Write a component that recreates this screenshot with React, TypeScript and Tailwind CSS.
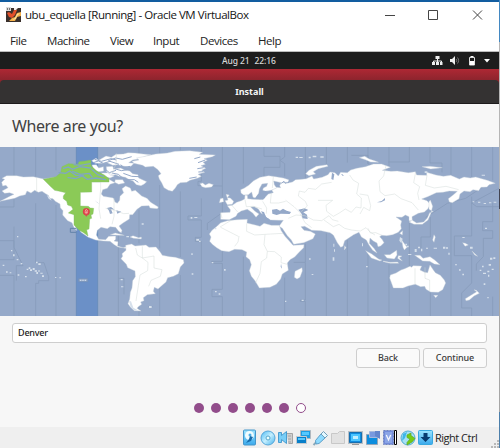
import React from "react";

const segoe = "font-['Open_Sans','Noto_Sans',sans-serif]";
const ubuntu = "font-['Noto_Sans','Open_Sans',sans-serif]";

function TitleBar() {
  return (
    <header className="flex h-[26px] shrink-0 items-center bg-white pl-[6px] text-[#151515]">
      <svg className="h-4 w-[15px] shrink-0" viewBox="0 0 15 16">
        <path fill="#3a302c" d="M0 1h15v14H0z" />
        <path fill="#e2502a" d="M1 6l2-1 3 2 2-4h3l-2 5-3 3-3-1z" />
        <path fill="#f7f0ee" d="M8 1h4l-2 2H8z" />
        <path fill="#d9d9d9" d="M0 0h5v4H0z" />
        <path fill="#777" d="M1 1h1v2H1zM3 1h1v2H3z" />
        <path fill="#f5b04a" d="M15 5v4l-4 1-2 4H3l3-3 3-1 2-4z" />
        <path fill="#ffe2a0" d="M14 6l-3 1-2 4-3 2 4-1 1-3z" />
      </svg>
      <h1 className="ml-1 w-[224px] shrink-0 text-[11.5px] leading-4 tracking-[-0.45px] whitespace-nowrap">
        ubu_equella [Running] - Oracle VM VirtualBox
      </h1>
      <div className="ml-auto flex items-center pr-[16px]">
        <svg className="h-[12px] w-[98px]" viewBox="0 0 98 12" fill="none" stroke="#454545">
          <path d="M0 6.5h10M43.5 1.5h9v9h-9zM88 1.5l9 9M97 1.5l-9 9" />
        </svg>
      </div>
    </header>
  );
}

function MenuBar() {
  return (
    <nav className="flex h-[23px] shrink-0 items-center bg-white pt-[2px] pl-[10px] text-[11.5px] leading-4 tracking-[-0.45px] text-[#222]">
      <span className="w-[37px]">File</span>
      <span className="w-[63px]">Machine</span>
      <span className="w-[43px]">View</span>
      <span className="w-[47px]">Input</span>
      <span className="w-[58px]">Devices</span>
      <span>Help</span>
    </nav>
  );
}

function SystemBar() {
  return (
    <div className={`flex h-[17px] shrink-0 items-center bg-[#1d1d1d] text-[#d8d8d8] ${ubuntu}`}>
      <span className="ml-[222px] flex w-[57px] gap-[5px] text-[8.5px] leading-3 font-medium tracking-[-0.1px] whitespace-nowrap">
        <span>Aug 21</span>
        <span>22:16</span>
      </span>
      <svg className="ml-auto mr-[9px] h-[11px] w-[58px]" viewBox="0 0 58 11">
        <path fill="#eee" d="M3.5 1h4v3h-4zM0 7h3v3H0zM4 7h3v3H4zM8 7h2.5v3H8z" />
        <path stroke="#eee" fill="none" d="M5.5 4v3M1.5 7.500V6h8v1.500" />
        <path fill="#eee" d="M18 4h2l3-3v9l-3-3h-2z" />
        <path stroke="#888" fill="none" strokeWidth=".8" d="M24 4c1 1 1 2 0 3M25.500 2.500c1.500 2 1.500 4 0 6" />
        <path stroke="#ddd" fill="none" d="M37.500 2.500h5v7.500h-5z" />
        <path fill="#fff" d="M38.500 1h3v1h-3zM38 6h4v4h-4z" />
        <path fill="#fff" d="M52 4h6l-3 3.500z" />
      </svg>
    </div>
  );
}

const northAmerica =
  "M5 127 14 118 6 115 20 107 50 107 70 111 100 110 131 117 168 111 220 110 280 126 303 126 306 116 327 118 345 128 330 133 322 145 308 149 304 162 310 169 328 172 340 174 345 186 352 190 359 181 360 169 371 158 366 146 377 138 391 144 395 154 406 151 425 168 441 175 452 187 475 201 472 206 450 204 447 197 425 198 411 208 398 224 389 224 388 237 369 249 357 258 366 271 364 278 356 274 347 262 330 260 322 266 303 262 292 271 289 285 296 298 317 299 326 289 347 288 347 298 342 303 354 305 353 318 370 323 386 318 392 324 375 325 354 321 343 314 330 304 310 303 287 300 265 292 242 276 240 269 226 258 231 272 223 265 216 248 203 242 188 225 189 212 181 203 180 192 166 184 159 176 149 175 145 166 137 161 126 154 115 157 104 151 93 159 81 153 76 164 59 168 44 175 22 179 0 184 31 168 42 163 29 158 14 160 6 153 24 143 18 136 8 138Z";
const greenZone =
  "M130 118 146 115 168 110 182 98 186 80 205 71 234 73 237 65 256 63 272 60 274 78 291 94 313 105 327 116 327 126 275 126 275 156 241 157 241 188 241 198 265 199 271 204 281 205 279 222 273 225 275 235 269 237 267 267 260 269 264 288 251 278 237 270 222 255 222 224 205 219 219 208 214 199 203 195 200 184 190 176 190 168 197 158 175 153 164 151 151 139Z";
const southAmerica =
  "M377 316 395 312 405 318 438 315 447 322 468 321 480 335 487 346 510 350 526 352 550 359 552 369 541 381 535 401 520 409 503 413 498 426 485 437 474 447 463 442 460 454 466 461 442 464 430 473 432 482 422 486 425 493 415 500 411 505 423 513 403 512 391 501 384 491 389 477 391 457 396 444 398 422 406 410 405 393 383 383 379 373 363 356 368 349 366 341 378 331Z";
const greenland =
  "M402 70 396 64 417 60 410 54 435 49 467 42 502 39 525 34 569 32 608 37 598 43 646 45 637 50 612 56 622 61 609 67 616 73 603 77 617 85 605 91 614 97 594 103 604 109 594 114 570 121 560 127 541 128 532 134 526 144 517 154 505 151 492 143 485 128 478 117 475 107 483 101 474 89 460 79 436 81 428 76Z";
const eurasia =
  "M662 218 690 217 691 209 682 197 697 196 710 187 724 182 734 177 735 165 742 166 743 176 758 178 789 179 797 170 805 162 820 158 815 149 830 142 842 143 839 137 844 127 860 130 877 126 887 119 905 118 919 116 936 108 941 117 966 112 984 104 990 96 1005 98 1015 108 1022 97 1042 98 1052 90 1070 85 1096 80 1120 72 1145 72 1171 82 1147 91 1173 94 1192 93 1225 98 1246 95 1250 105 1280 106 1280 97 1308 105 1330 109 1352 106 1378 117 1392 111 1411 114 1427 111 1448 117 1462 121 1486 130 1467 134 1461 141 1443 142 1436 152 1419 149 1410 155 1392 153 1380 162 1377 176 1357 188 1348 186 1345 176 1362 163 1372 154 1348 153 1329 157 1309 158 1283 170 1265 177 1281 182 1291 193 1284 206 1273 216 1255 220 1236 230 1237 243 1227 242 1227 230 1216 225 1206 232 1188 231 1205 243 1202 255 1204 266 1195 277 1178 284 1160 287 1145 286 1139 290 1147 299 1152 308 1142 318 1134 320 1131 309 1120 303 1110 294 1108 310 1123 326 1131 339 1118 331 1107 315 1099 300 1084 291 1077 277 1061 284 1045 295 1034 302 1029 319 1022 322 1012 308 1000 285 990 278 963 272 935 271 914 259 903 260 912 271 931 274 946 282 939 296 911 308 881 313 874 300 862 287 847 265 837 259 850 241 838 241 812 240 801 235 794 225 783 220 775 207 763 200 752 201 765 214 777 222 768 232 758 219 742 208 724 213 713 220 708 229 688 239 662 238Z";
const africa =
  "M662 248 682 242 711 239 742 238 741 249 766 255 780 259 792 250 814 256 838 256 843 271 855 289 866 301 879 316 912 314 911 323 898 336 884 351 870 359 862 369 865 391 847 402 842 417 829 433 810 442 778 444 765 422 754 409 748 392 754 374 749 359 738 350 740 336 726 329 704 328 687 335 665 332 650 323 637 313 629 304 633 291 628 282 636 271 651 259Z";
const scandinavia =
  "M723 159 722 149 732 145 746 136 761 122 780 112 806 107 827 110 850 114 866 119 866 126 844 128 821 123 823 134 830 144 813 151 798 154 788 151 790 144 800 139 803 130 786 132 778 147 776 160 766 174 759 172 755 156 745 164 731 165Z";
const australia =
  "M1169 414 1171 405 1188 399 1203 390 1214 386 1230 379 1235 382 1239 377 1265 378 1260 390 1274 397 1283 398 1290 375 1298 387 1306 398 1321 406 1333 420 1337 429 1328 449 1315 457 1292 456 1278 448 1274 439 1262 440 1246 433 1224 438 1209 444 1193 444 1180 444Z";
const islands =
  "M390 291 399 287 416 293 424 291 424 297 400 295ZM331 284 346 279 373 286 358 286ZM600 131 608 129 616 135 627 130 640 134 635 141 617 143 606 140ZM678 163 688 165 682 173 691 174 701 184 697 193 682 194 675 182 684 180ZM661 176 669 174 671 185 658 188ZM906 383 907 393 900 412 891 417 883 412 885 394 897 388ZM917 101 927 91 949 79 981 74 984 79 955 86 940 95 947 102 927 107ZM1078 53 1094 49 1108 57 1124 62 1136 67 1112 66 1096 59ZM1266 80 1290 79 1327 83 1292 87ZM1227 246 1237 241 1250 249 1271 246 1282 234 1289 218 1300 215 1287 208 1287 185 1291 180 1298 199 1293 219 1284 240 1267 253 1242 253ZM1199 280 1208 272 1207 285ZM1205 300 1221 322 1213 330 1209 322ZM1153 344 1170 344 1190 331 1191 345 1183 357 1161 354ZM1195 347 1206 348 1198 353 1207 363 1199 359 1193 355ZM1097 332 1114 341 1137 358 1146 360 1140 363 1114 354ZM1149 363 1170 367 1193 366 1196 370 1171 370 1150 365ZM1244 346 1260 346 1269 355 1290 350 1303 359 1320 374 1303 372 1289 364 1268 363ZM1301 466 1314 466 1307 473ZM1396 476 1419 462 1430 455 1422 449 1429 451 1438 460 1422 468 1408 480 1398 482ZM1302 284 1306 291 1302 307 1298 300ZM1388 308 1395 319 1405 315 1396 310ZM1416 333 1433 349 1424 345ZM1034 317 1038 323 1033 330Z";
const arctic =
  "M275 62 288 55 296 61 318 48 334 52 348 43 370 42 384 38 405 39 430 42 453 44 433 50 420 56 398 60 386 68 402 70 393 79 383 81 369 78 353 74 338 76 322 68 305 70 285 70ZM276 75 289 74 296 84 310 80 311 93 295 95 281 89ZM319 80 337 79 343 87 362 84 374 90 389 93 398 101 414 104 416 114 440 125 433 132 423 137 409 134 399 123 388 119 376 112 358 109 347 104 332 106 320 96ZM303 99 325 98 343 108 330 114 312 109ZM346 119 368 119 374 129 356 133 344 127Z";

const specks =
  "M33 330h4v4h-4zM39 343h5v6h-5zM50 357h5v4h-5zM62 369h5v4h-5zM51 288h4v4h-4zM8 374h5v4h-5zM18 394h5v4h-5zM29 397h5v3h-5zM53 403h5v4h-5zM75 408h5v4h-5zM108 365h5v5h-5zM115 370h7v5h-7zM165 411h4v3h-4zM178 412h5v3h-5zM80 386h5v4h-5zM86 382h5v5h-5zM90 388h6v5h-6zM98 384h6v6h-6zM104 391h7v4h-7zM109 396h5v6h-5zM115 391h4v4h-4zM121 398h7v3h-7zM126 406h6v5h-6zM362 417h6v4h-6zM363 439h7v3h-7zM447 498h8v6h-8zM574 340h4v5h-4zM575 400h5v4h-5zM645 453h5v4h-5zM656 460h5v4h-5zM589 297h8v5h-8zM597 302h5v4h-5zM572 231h5v5h-5zM583 231h9v3h-9zM644 264h5v4h-5zM635 366h5v4h-5zM672 387h5v5h-5zM855 482h4v4h-4zM905 479h6v4h-6zM927 355h5v4h-5zM935 402h5v3h-5zM1000 311h3v9h-3zM1002 328h3v7h-3zM998 352h5v10h-5zM1098 378h5v4h-5zM1216 311h5v5h-5zM1220 317h6v5h-6zM1244 327h6v9h-6zM1254 320h6v5h-6zM1278 323h6v3h-6zM1301 323h10v3h-10zM1329 320h7v6h-7zM1338 322h6v4h-6zM1345 338h4v6h-4zM1365 373h6v3h-6zM1377 388h5v4h-5zM1387 401h5v5h-5zM1418 184h5v3h-5zM1434 185h7v3h-7zM1451 189h7v3h-7zM1467 187h7v3h-7zM1481 185h8v3h-8zM1455 263h6v4h-6zM1462 471h4v4h-4zM1470 353h7v6h-7zM1480 352h6v5h-6zM1466 372h7v5h-7zM1475 386h6v4h-6zM1446 377h5v5h-5zM1439 389h5v4h-5zM1449 398h9v4h-9zM1462 392h6v5h-6zM1464 404h4v6h-4zM1451 430h5v5h-5zM887 50h7v4h-7zM898 51h10v3h-10zM926 50h6v5h-6zM938 47h11v5h-11zM961 49h10v4h-10zM1274 94h8v5h-8zM1445 104h10v3h-10zM1387 291h7v3h-7zM1410 320h8v6h-8zM425 250h6v4h-6zM379 288h8v4h-8zM1263 326h4v8h-4zM1224 342h10v3h-10zM1086 310h3v9h-3z";

const borders =
  "M110 113v42M302 126v20l-5 60 5 30M342 175v54l-6 24M317 205l27 6 27 10 16-1M349 40v30l-14 31M427 319v35l35-6v36l24 5-5 20-28 12-7 18M407 324l5 21 15 9 17 13-1 25-23 13-5 32-7 46M660 261l35-21M662 262l53 27M740 250v24l24 11 48-3 37-2M717 288l-3 18-10 13M795 284l-3 30 10 20-2 20-16 11-4 35-13 28M802 334l22 1 20 16-1 17 19 5M662 219l4 15M695 195l18 21M735 179l4 21 21-1 26 8M788 184l12 20-1 17M814 158l-3 31 25 0 21-5M820 110l-3 34M857 181l25 19 18 18 22-20-6-14-21-16 3-15 17 4 10-12 22 3 18-16 30-5M865 235l23-10 27 2 25 13 25 2 22-15 10 12 18 5M900 220l15 28 20 15M954 181h44l-20 15 2 18 20 15 18-10 18-12 18 10 14-16 15 3 1-30-14-12 6-32-17-10-10-15M1079 162l25 4 8 31-3 15-18-10-11 20M1158 76l-7 32-14 15 3 32 15 12 29-5 19 14 33 12 19 22M1247 96l-6 32 18 12-6 20 4 20M1281 106l-5 30 27 8 35-5 38 10M972 240l28 20 17-7 17 12 20 5 27 3 17-10 12 13 15 9M1104 265l7 14 16-1 19 8M1245 385v48M1275 382v33l14 5v34";

function WorldMap() {
  return (
    <svg className="block h-[169px] w-full shrink-0 bg-[#95a9c9]" viewBox="0 21 1497 507" preserveAspectRatio="none">
      <path fill="#6b90c7" d="M229 21h64v507h-64z" />
      <g fill="none" stroke="#879bba" strokeWidth="2.5">
        <path d="M42 21v180H0M0 302h42v57H0M42 260v62l27 55H49v45M0 406h42v122M107 21v92M107 190v178l25 0 14 42v12h-30v8h-9v98M168 21v70M168 195v333M355 250v278M417 21v20M417 210v100M417 490v38M479 21v20M479 135v190M479 445v83M541 21v10M541 154v197M541 405v123M604 21v103h-10v13l73 1v80l-45 32v20M604 175v53h-40v12h40v52h-18v12h18v224M667 21v117M667 333v31h-32v6h32v78h-31v22h31v58M730 21v110M730 350v178M792 21v28h48v33h-48v29M792 443v85M854 21v30l-14 10 14 10v38M854 413v115M916 21v100M916 311v56h-35M916 368v112h-15v4h15v44M979 21v54M979 280v248M1042 21v47M1042 300v228M1104 21v50M1104 339v189M1104 46h-50M1104 46v26l30 3M1167 21v58M1167 373v155M1228 21v45h-63M1228 247v147M1228 440v88M1290 21v48h36v28M1291 231v60h-28v34M1291 457v71M1353 21v85M1353 185v343M1415 21v90M1415 170v118h-52v59h52v82l-30 30v45h30v24M1478 21v100M1478 188v57h-30v27h30v23h-28v55l-21 22v20M1478 470v58M1497 145l-82 44 15 11h67M1277 232l65-42 55-15 63-42M355 415h17v48M445 500h13" />
        <path stroke="#668ab9" d="M229 21v507M293 21v507" />
      </g>
      <g stroke="#c5cfd8" strokeWidth="1.2" strokeLinejoin="round">
        <g fill="#fff">
          <path d={northAmerica} />
          <path d={arctic} />
          <path d={greenland} />
          <path d={southAmerica} />
          <path d={eurasia} />
          <path d={africa} />
          <path d={scandinavia} />
          <path d={islands} />
          <path d={australia} />
        </g>
        <path d={greenZone} fill="#8bca57" stroke="#82bd67" />
      </g>
      <g fill="#d6e0eb">
        <path d={specks} />
        <path d="M387 484h6l7 19 17 10-16-3-9-9zM140 164l9 8 6 10-9-6zM1200 291l8 5-4 14-6-8z" />
      </g>
      <g fill="#95a9c9">
        <path d="M816 209 830 207 840 212 849 206 860 212 873 216 869 222 842 221 830 225 817 221ZM895 209 914 205 925 210 910 217 921 224 923 237 907 235 905 222ZM783 214 792 216 798 231 809 238 806 244 795 235ZM766 174 776 162 784 151 792 154 803 152 794 160 795 174 780 178ZM1131 187 1145 183 1155 174 1155 181 1143 187ZM284 181 298 192 293 189ZM321 204 333 201 344 209 333 208 338 220 330 222 327 212ZM349 211 364 215 352 221Z" />
        <path d="M338 351l3 20-5-10zM843 371l3 15-4-6zM996 98l7 5-3 17-6-3z" />
      </g>
      <g fill="none" stroke="#80a5c6" strokeWidth="4" strokeLinecap="round">
        <path d="M177 98l20 2 12-7 18 13 23 1M190 85l15-4 12 7 22-8 33 4M222 74l20 2 28-5M204 113l23 3 20-8 15 10 26-4 28 5M218 94l22 9 28-3 8 11M275 88l18 16 17 5" />
      </g>
      <g fill="none" stroke="#95a9c9" strokeWidth="3">
        <path d="M280 68l15-5 15 7 20-6 27 9M284 58l20 6 29-8 16 4M325 62l22-8 20 4 28-8M340 85l24 7 18-3M315 87l13 11 20-7M362 74l9 8 20-3M336 99l19 4 14 12M370 100l25 9 24 1M379 119l24 0 12 8M601 51l-18 5M616 60l-22 8M611 83l-19 3M610 95l-15 1M590 111l-22 4M844 130l8-6 5 7M864 129l5-8M1025 102l5 6M1205 235l18 0" />
      </g>
      <path fill="none" stroke="#d0d9d6" strokeWidth="1.4" strokeLinejoin="round" d={borders} />
      <path fill="#95a9c9" stroke="#7690b4" strokeWidth="2" d="M236 416h27v9h-27z" />
      <path stroke="#ccd8e7" strokeWidth="4" strokeDasharray="4 3" d="M240 421h20" />
      <path fill="none" stroke="#6383a9" strokeWidth="3" d="M228 265h-17v12h18" />
      <circle cx="259" cy="215" r="10" fill="#e3434b" stroke="#c92a39" />
      <path fill="#d84a50" d="M252 221h14l-7 9z" />
      <path stroke="#fff0e0" strokeWidth="2" fill="none" d="M255 212l4-3 4 3M254 216h10M256 219h6" />
    </svg>
  );
}

function InstallButton({ children }: { children: React.ReactNode }) {
  return (
    <button className="h-[20px] w-[64px] rounded-[3px] border border-[#cecece] bg-[#fafafa] text-[9px] leading-3 font-medium tracking-[-0.1px] text-[#3c3c3c]">
      {children}
    </button>
  );
}

function ProgressDots() {
  return (
    <div className="flex h-[10px] gap-[7px] pl-[193.5px]">
      <i className="my-auto block size-[10px] rounded-full bg-[#924d8b]" />
      <i className="my-auto block size-[10px] rounded-full bg-[#924d8b]" />
      <i className="my-auto block size-[10px] rounded-full bg-[#924d8b]" />
      <i className="my-auto block size-[10px] rounded-full bg-[#924d8b]" />
      <i className="my-auto block size-[10px] rounded-full bg-[#924d8b]" />
      <i className="my-auto block size-[10px] rounded-full bg-[#924d8b]" />
      <i className="my-auto block size-[10px] rounded-full border border-[#924d8b] bg-white" />
    </div>
  );
}

function StatusIcons() {
  return (
    <svg className="h-[17px] w-[192px] shrink-0" viewBox="0 0 192 17">
      <defs>
        <linearGradient id="blue" x2="0" y2="1"><stop stopColor="#9be4ff" /><stop offset="1" stopColor="#3aa9ec" /></linearGradient>
        <linearGradient id="aqua" x2="1" y2="1"><stop stopColor="#49b9f2" /><stop offset=".5" stopColor="#c5efff" /><stop offset="1" stopColor="#44b1eb" /></linearGradient>
      </defs>
      <g>
        <rect x=".5" y="1" width="12" height="15" rx="1" fill="url(#blue)" stroke="#4596ca" />
        <circle cx="6.500" cy="6.500" r="4.500" fill="#f0fcff" />
        <circle cx="7" cy="6" r="1.500" fill="#4aaee6" />
        <path d="M7 7l3 1-2 4-5 2 3-4z" fill="#176cac" />
      </g>
      <circle cx="25" cy="9" r="7" fill="url(#aqua)" stroke="#56a7da" />
      <circle cx="25" cy="9" r="2" fill="#eaffff" stroke="#57a6cb" />
      <path fill="#cfcfcf" stroke="#a5a5a5" d="M43.500 4.500h6v10h-4M45 7h3m-3 3h3m-3 3h3" />
      <path fill="#79cef7" stroke="#4a9dd0" d="M35.500 3.500h3v3l5-4v12l-5-4v3h-3z" />
      <path fill="#1c9ee3" stroke="#afb7be" d="M57.500 1.500h10v8h-10z" /><path fill="#087fc9" stroke="#c4cbd0" d="M53.500 7.500h10v7h-10z" /><path fill="#54c8ff" d="M59 3h7v3h-7zM55 9h7v2h-7z" />
      <path fill="none" stroke="#8aa9ba" strokeWidth="2" d="M70.500 16l3-3" />
      <path fill="#8fdbff" stroke="#5d9fc8" d="M72.500 11.500l5.500-6.500 4 4-6 5.500-3 .5z" /><path fill="#e4f8ff" stroke="#719eba" d="M78 5l2.500-2.500 4 4L82 9z" />
      <path fill="#e2e2e2" stroke="#c8c8c8" d="M88.500 4.500h6l2-2h5v12h-13z" />
      <path fill="#b8bfc5" d="M105 2h15v13h-15z" /><path fill="#108cdf" stroke="#176faf" d="M106.500 3.500h12v10h-12z" /><path fill="#c2efff" stroke="#4bc5ff" strokeWidth="2" d="M109 6h7v5h-7z" /><path stroke="#999" d="M109 15.500h7" />
      <path fill="#0c8dde" stroke="#94a6b8" d="M123.500 5.500h11v10h-11z" /><path fill="#7899df" stroke="#a7b9dc" d="M126.500 2.500h10v6h-10z" /><path fill="#6385cc" d="M132 2h5v8l-5-3z" />
      <path fill="#718bda" stroke="#7184bd" strokeDasharray="2 1" d="M140.500 1.500h10v14h-10z" /><path fill="#8ba5e6" d="M142 3h7v11h-7z" /><path fill="none" stroke="#f4f7ff" strokeWidth="1.3" d="M143.300 6l2.200 5 2.200-5" /><path fill="#fff" stroke="#050505" d="M151.500 1.500h2v14h-2z" />
      <circle cx="165" cy="9" r="7" fill="#a5e1f3" stroke="#50abd4" /><path fill="#3db6e9" d="M160 5l4-2-2 6-3 3z" /><path fill="#75cc13" stroke="#5fa52a" strokeWidth=".7" d="M164 6l4-2v2.500l4 3-3 3.500-5 3v-2.500l3-3.500-3-1.500z" />
      <rect x="175.500" y="1.500" width="14" height="14" rx="1" fill="url(#blue)" stroke="#39a9e0" /><path fill="#063b70" d="M180.500 4h4v4h3l-5 5-5-5h3z" />
    </svg>
  );
}

export default function App() {
  return (
    <div className={`flex h-[448px] w-[500px] overflow-hidden bg-[#f6f6f6] ${segoe}`}>
      <main className="flex w-[499px] shrink-0 flex-col">
        <div className="h-[2px] shrink-0 bg-[#125da0]" />
        <TitleBar />
        <MenuBar />
        <div className="h-px shrink-0 bg-[#bdbdbd]" />
        <SystemBar />
        <div className="h-[35px] shrink-0 bg-linear-to-b from-[#ae2834] to-[#8d242d] to-[11px]">
          <div className={`mt-[11px] flex h-[24px] items-center justify-center rounded-t-[4px] border-b border-[#1d1b1c] bg-[#343232] text-[9px] leading-3 font-bold text-[#f5f5f5] ${ubuntu}`}>
            Install
          </div>
        </div>
        <section className={`flex h-[323px] shrink-0 flex-col bg-[#f7f7f7] ${ubuntu}`}>
          <h2 className="h-[43px] shrink-0 pt-[10px] pl-[12px] text-[16px] leading-[24px] tracking-[-0.4px] text-[#414141]">Where are you?</h2>
          <WorldMap />
          <div className="mt-[7px] ml-[12px] flex h-[20px] w-[475px] shrink-0 items-center rounded-[3px] border border-[#cecece] bg-white pl-[5px] text-[9px] leading-3 font-medium tracking-[-0.2px] text-[#222]">
            Denver
          </div>
          <div className="mt-[5px] mb-[35px] flex justify-end gap-[3px] pr-[12px]">
            <InstallButton>Back</InstallButton>
            <InstallButton>Continue</InstallButton>
          </div>
          <ProgressDots />
        </section>
        <footer className="flex h-[21px] shrink-0 items-center bg-[#efefef] pl-[243px]">
          <StatusIcons />
          <span className="w-[43px] text-[11px] leading-4 tracking-[-0.5px] whitespace-nowrap text-[#222]">Right Ctrl</span>
          <svg className="mt-auto ml-auto h-[8px] w-[8px]" viewBox="0 0 8 8">
            <path fill="#b8b8b8" d="M6 0h2v2H6zM3 3h2v2H3zM6 3h2v2H6zM0 6h2v2H0zM3 6h2v2H3zM6 6h2v2H6z" />
          </svg>
        </footer>
      </main>
      <aside className="flex w-px shrink-0 flex-col">
        <div className="h-[42px] bg-[#4388c2]" />
        <div className="h-[147px] bg-[#b6b6b6]" />
        <div className="h-[20px] bg-[#424350]" />
        <div className="h-[203px] bg-[#a6a6a6]" />
        <div className="h-[36px] bg-[#4c7fab]" />
      </aside>
    </div>
  );
}
